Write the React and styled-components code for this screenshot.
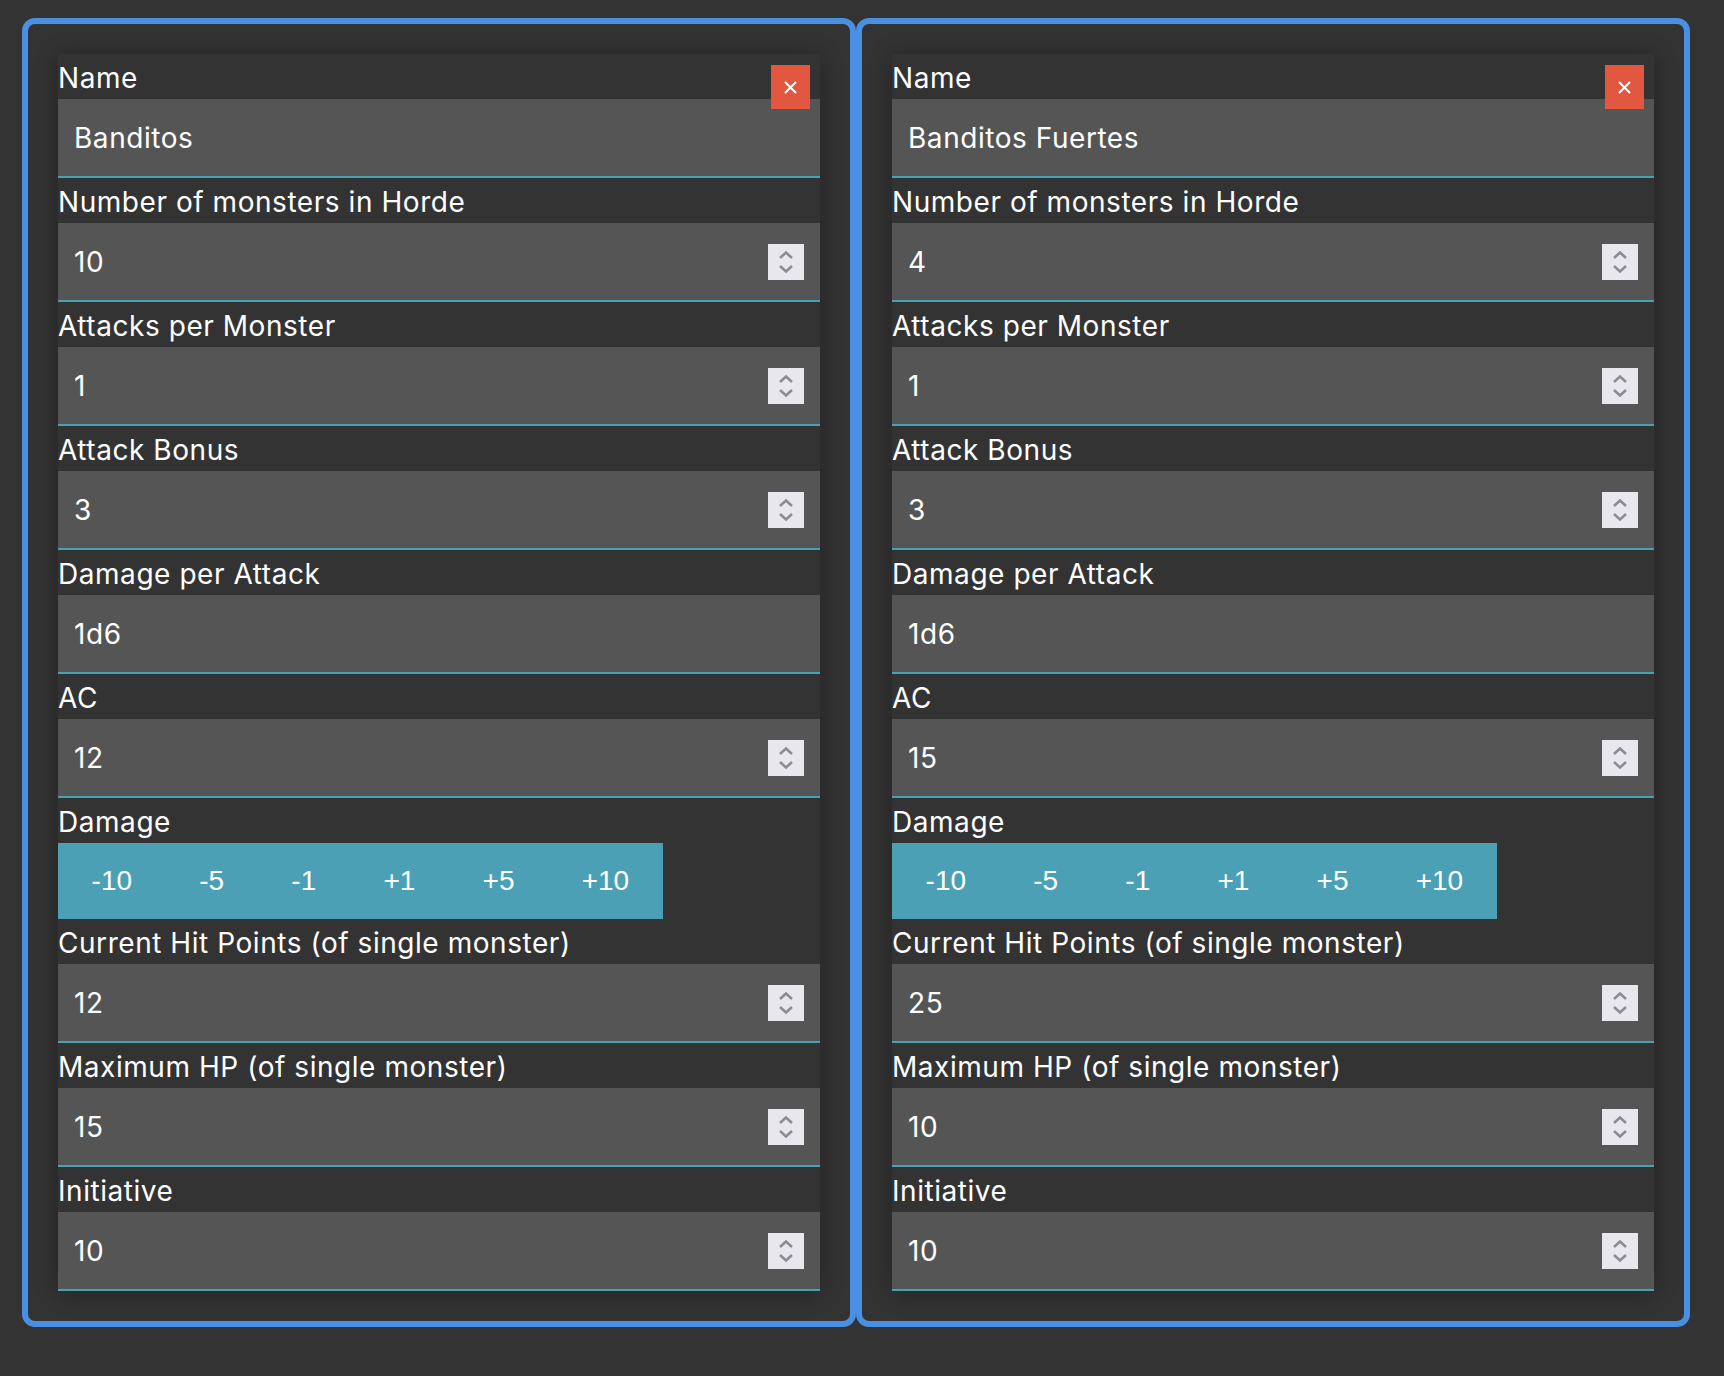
import React from 'react';
import styled, { createGlobalStyle } from 'styled-components';

const GlobalStyle = createGlobalStyle`
  body {
    margin: 0;
    background: #333333;
    font-family: Inter, 'Open Sans', sans-serif;
    color: #ffffff;
  }
`;

const Page = styled.div`
  display: flex;
  align-items: flex-start;
  padding: 18px 0 0 22px;
`;

const Panel = styled.section`
  box-sizing: border-box;
  width: 834px;
  padding: 30px;
  border: 6px solid #4a90e2;
  border-radius: 13px;
  background: #333333;
`;

const Card = styled.div`
  position: relative;
  background: #333333;
  box-shadow: 0 2px 22px rgba(0, 0, 0, 0.32);
`;

const Label = styled.div`
  height: 45px;
  line-height: 48px;
  font-size: 28px;
  letter-spacing: 0.55px;
  color: #ffffff;
  white-space: nowrap;
`;

const InputBox = styled.div`
  box-sizing: border-box;
  display: flex;
  align-items: center;
  height: 79px;
  padding: 1px 16px 0 16px;
  background: #555555;
  border-bottom: 2px solid #4ba0b4;
`;

const Value = styled.input`
  flex: 1;
  min-width: 0;
  padding: 0;
  border: none;
  outline: none;
  background: transparent;
  color: #ffffff;
  font-family: inherit;
  font-size: 28px;
  letter-spacing: 0.55px;
`;

const Spinner = styled.div`
  display: flex;
  align-items: center;
  justify-content: center;
  width: 36px;
  height: 36px;
  background: #e7e7ed;
`;

const CloseButton = styled.button`
  position: absolute;
  top: 11px;
  right: 10px;
  display: flex;
  align-items: center;
  justify-content: center;
  width: 39px;
  height: 44px;
  padding: 0;
  border: none;
  background: #e2573f;
`;

const DamageGroup = styled.div`
  display: inline-flex;
  height: 76px;
  background: #4ca0b5;
`;

const DamageButton = styled.button`
  padding: 0 33.6px;
  border: none;
  background: transparent;
  color: #ffffff;
  font-family: 'Liberation Sans', Arial, sans-serif;
  font-size: 28px;
`;

const Row = styled.div`
  display: flex;
`;

const SpinIcon = () => (
  <svg width="20" height="26" viewBox="0 0 20 26" fill="none" stroke="#8c8c96" strokeWidth="2.6">
    <path d="M4 9 L10 3.5 L16 9" />
    <path d="M4 17 L10 22.5 L16 17" />
  </svg>
);

const CloseIcon = () => (
  <svg width="13" height="13" viewBox="0 0 13 13" stroke="#ffffff" strokeWidth="2">
    <path d="M1 1 L12 12 M12 1 L1 12" />
  </svg>
);

const Field = ({ label, value, number }) => (
  <>
    <Label>{label}</Label>
    <InputBox>
      <Value readOnly value={value} />
      {number && (
        <Spinner>
          <SpinIcon />
        </Spinner>
      )}
    </InputBox>
  </>
);

const steps = ['-10', '-5', '-1', '+1', '+5', '+10'];

const HordeCard = ({ horde }) => (
  <Panel>
    <Card>
      <CloseButton aria-label="remove">
        <CloseIcon />
      </CloseButton>
      <Field label="Name" value={horde.name} />
      <Field label="Number of monsters in Horde" value={horde.count} number />
      <Field label="Attacks per Monster" value={horde.attacks} number />
      <Field label="Attack Bonus" value={horde.bonus} number />
      <Field label="Damage per Attack" value={horde.damage} />
      <Field label="AC" value={horde.ac} number />
      <Label>Damage</Label>
      <Row>
        <DamageGroup>
          {steps.map((s) => (
            <DamageButton key={s}>{s}</DamageButton>
          ))}
        </DamageGroup>
      </Row>
      <Field label="Current Hit Points (of single monster)" value={horde.hp} number />
      <Field label="Maximum HP (of single monster)" value={horde.maxHp} number />
      <Field label="Initiative" value={horde.initiative} number />
    </Card>
  </Panel>
);

const hordes = [
  { name: 'Banditos', count: 10, attacks: 1, bonus: 3, damage: '1d6', ac: 12, hp: 12, maxHp: 15, initiative: 10 },
  { name: 'Banditos Fuertes', count: 4, attacks: 1, bonus: 3, damage: '1d6', ac: 15, hp: 25, maxHp: 10, initiative: 10 },
];

export default function App() {
  return (
    <>
      <GlobalStyle />
      <Page>
        {hordes.map((h) => (
          <HordeCard key={h.name} horde={h} />
        ))}
      </Page>
    </>
  );
}
